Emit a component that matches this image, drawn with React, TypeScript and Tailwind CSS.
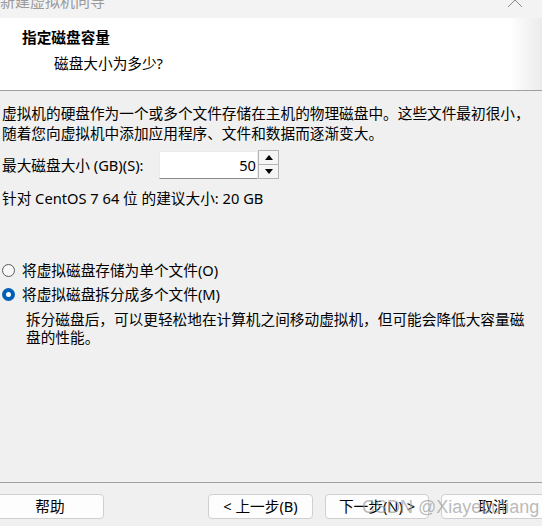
import React from 'react';

const font = { fontFamily: '"Noto Sans", "Noto Sans CJK SC", sans-serif' };

const WizardButton: React.FC<{ label: string; className?: string }> = ({ label, className = '' }) => (
  <button
    className={`h-[25px] rounded-[4px] border border-[#d0d0d0] bg-[#fdfdfd] text-[14.67px] leading-[23px] text-black whitespace-nowrap ${className}`}
  >
    {label}
  </button>
);

const Radio: React.FC<{ checked?: boolean; label: string }> = ({ checked, label }) => (
  <div className="flex items-center h-[20px] pl-[2px] gap-[7px]">
    {checked ? (
      <span className="w-[13px] h-[13px] rounded-full bg-[#005fb8] flex items-center justify-center">
        <span className="w-[5px] h-[5px] rounded-full bg-white" />
      </span>
    ) : (
      <span className="w-[13px] h-[13px] rounded-full border border-[#5a5a5a] bg-[#f7f7f7]" />
    )}
    <span className="text-[14.67px] leading-[20px] text-black">{label}</span>
  </div>
);

const App: React.FC = () => {
  return (
    <div className="w-[542px] h-[526px] bg-[#f0f0f0] flex flex-col overflow-hidden relative" style={font}>
      {/* title bar, cut off at the top */}
      <div className="h-[18px] bg-[#f3f3f3] overflow-hidden relative">
        <div className="text-[15px] leading-[20px] text-[#9a9a9a] mt-[-9px]">新建虚拟机向导</div>
        <svg className="absolute left-[507px] top-[-8px]" width="16" height="16" viewBox="0 0 16 16">
          <path d="M1 1 L15 15 M15 1 L1 15" stroke="#8a8a8a" strokeWidth="1" fill="none" />
        </svg>
      </div>

      {/* header */}
      <div className="h-[73px] bg-linear-to-r from-white from-[94%] to-[#ebebeb] border-b border-[#a0a0a0] pt-[9px] pl-[22px]">
        <div className="text-[14.67px] leading-[20px] font-bold text-black">指定磁盘容量</div>
        <div className="text-[14.67px] leading-[20px] text-black mt-[6px] pl-[32px]">磁盘大小为多少?</div>
      </div>

      {/* body */}
      <div className="px-[2px] pt-[12px] text-[14.67px] leading-[20px] text-black">
        <p className="whitespace-nowrap">虚拟机的硬盘作为一个或多个文件存储在主机的物理磁盘中。这些文件最初很小，</p>
        <p className="whitespace-nowrap">随着您向虚拟机中添加应用程序、文件和数据而逐渐变大。</p>

        <div className="flex items-center h-[29px] mt-[7px]">
          <span className="w-[157px] whitespace-nowrap">最大磁盘大小 (GB)(S):</span>
          <div className="w-[99px] h-[28px] mt-[1px] bg-white border border-[#ececec] border-b-[#8a8a8a] flex items-center justify-end pr-[1px]">
            50
          </div>
          <div className="w-[21px] h-[29px] border border-[#b4b4b4] bg-[#f0f0f0] flex flex-col">
            <div className="flex-1 border-b border-[#b4b4b4] bg-[#f5f5f5] flex items-center justify-center">
              <svg width="8" height="5" viewBox="0 0 8 5"><path d="M0 5 L4 0 L8 5 Z" fill="#000" /></svg>
            </div>
            <div className="flex-1 bg-[#f5f5f5] flex items-center justify-center">
              <svg width="8" height="5" viewBox="0 0 8 5"><path d="M0 0 L8 0 L4 5 Z" fill="#000" /></svg>
            </div>
          </div>
        </div>

        <p className="mt-[9px]">针对 CentOS 7 64 位 的建议大小: 20 GB</p>
      </div>

      <div className="mt-[52px]">
        <Radio label="将虚拟磁盘存储为单个文件(O)" />
        <div className="mt-[4px]">
          <Radio checked label="将虚拟磁盘拆分成多个文件(M)" />
        </div>
        <div className="mt-[6px] pl-[26px] text-[14.67px] leading-[18px] text-black">
          <p className="whitespace-nowrap">拆分磁盘后，可以更轻松地在计算机之间移动虚拟机，但可能会降低大容量磁</p>
          <p>盘的性能。</p>
        </div>
      </div>

      {/* footer */}
      <div className="mt-auto h-[44px] border-t border-[#a0a0a0] pt-[11px] flex">
        <WizardButton label="帮助" className="ml-[-4px] w-[108px] shrink-0" />
        <WizardButton label="< 上一步(B)" className="ml-[104px] w-[105px] shrink-0" />
        <WizardButton label="下一步(N) >" className="ml-[12px] w-[104px] shrink-0" />
        <WizardButton label="取消" className="ml-[12px] w-[104px] shrink-0" />
      </div>

      {/* watermark */}
      <div
        className="absolute left-[362px] top-[495px] text-[18px] leading-[24px] text-[#9c9c9c]/70 pointer-events-none whitespace-nowrap"
        style={{ fontFamily: '"Liberation Sans", sans-serif' }}
      >
        CSDN @Xiayebuliang
      </div>
    </div>
  );
};

export default App;
